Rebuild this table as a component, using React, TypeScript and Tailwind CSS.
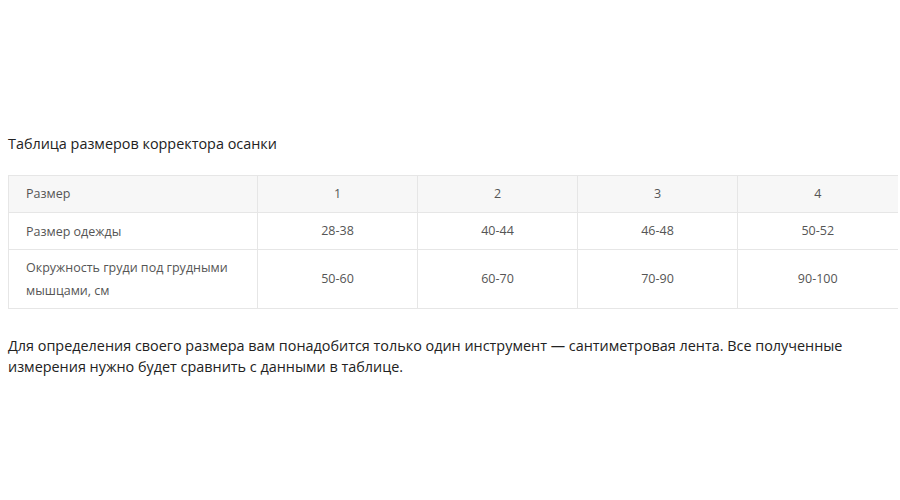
export default function App() {
  const cols = ["1", "2", "3", "4"];
  const rows: [string, string[]][] = [
    ["Размер одежды", ["28-38", "40-44", "46-48", "50-52"]],
    ["Окружность груди под грудными мышцами, см", ["50-60", "60-70", "70-90", "90-100"]],
  ];
  return (
    <div className="w-[900px] h-[500px] bg-white pl-2 pt-[133px] text-[#333]" style={{ fontFamily: '"Open Sans", "Noto Sans", sans-serif' }}>
      <div className="text-[14.4px] leading-[21px] text-[#222]">Таблица размеров корректора осанки</div>
      <table className="mt-[21px] w-[889px] border-collapse text-[12.5px] text-[#555] table-fixed">
        <colgroup>
          <col className="w-[249px]" />
          <col className="w-[160px]" />
          <col className="w-[160px]" />
          <col className="w-[160px]" />
          <col className="w-[160px]" />
        </colgroup>
        <tbody>
          <tr className="bg-[#f7f7f7] h-[37px]">
            <td className="border border-[#e6e6e6] pl-[17px] text-left">Размер</td>
            {cols.map((c, i) => (
              <td key={c} className={"border border-[#e6e6e6] text-center" + (i === 3 ? " border-r-0" : "")}>{c}</td>
            ))}
          </tr>
          {rows.map(([label, vals]) => (
            <tr key={label} className={label.length > 20 ? "h-[59px]" : "h-[37px]"}>
              <td className="border border-[#e6e6e6] pl-[17px] pr-4 text-left leading-[23px]">{label}</td>
              {vals.map((v, i) => (
                <td key={i} className={"border border-[#e6e6e6] text-center" + (i === 3 ? " border-r-0" : "")}>{v}</td>
              ))}
            </tr>
          ))}
        </tbody>
      </table>
      <p className="mt-[26px] w-[880px] text-[14.4px] leading-[21px] text-[#222]">
        Для определения своего размера вам понадобится только один инструмент — сантиметровая лента. Все полученные измерения нужно будет сравнить с данными в таблице.
      </p>
    </div>
  );
}
